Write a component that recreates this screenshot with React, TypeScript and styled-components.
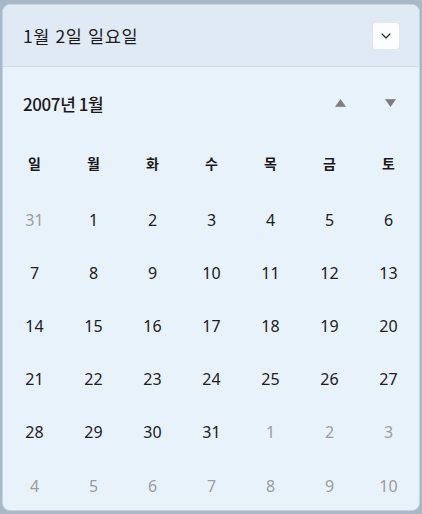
import React from "react";
import styled, { createGlobalStyle } from "styled-components";

const GlobalStyle = createGlobalStyle`
  html, body {
    margin: 0;
    padding: 0;
    background: #a9b8c7;
  }
  body {
    font-family: "Noto Sans", "Noto Sans CJK KR", sans-serif;
  }
`;

const Page = styled.div`
  width: 422px;
  height: 514px;
  padding: 4px 2px 3px 2px;
  box-sizing: border-box;
`;

const Flyout = styled.div`
  height: 100%;
  box-sizing: border-box;
  border: 1px solid #c7d2dc;
  border-radius: 8px;
  background: #e8f2fa;
  overflow: hidden;
  display: flex;
  flex-direction: column;
`;

const Header = styled.div`
  height: 62px;
  flex: none;
  box-sizing: border-box;
  display: flex;
  align-items: center;
  justify-content: space-between;
  padding: 0 19px 0 20px;
  background: #dfeaf4;
  border-bottom: 1px solid #cfdbe6;
`;

const Title = styled.div`
  font-family: "Noto Sans CJK KR", sans-serif;
  font-size: 17.5px;
  color: #1c1c1c;
  letter-spacing: 0.6px;
  word-spacing: 1px;
`;

const ExpandButton = styled.div`
  width: 28px;
  height: 28px;
  box-sizing: border-box;
  border-radius: 4px;
  background: #fbfdfe;
  border: 1px solid #e1e7ec;
  display: flex;
  align-items: center;
  justify-content: center;
`;

const MonthBar = styled.div`
  height: 72px;
  flex: none;
  display: flex;
  align-items: center;
  padding: 0 4px 0 20px;
`;

const MonthLabel = styled.div`
  flex: 1;
  font-family: "Noto Sans CJK KR", sans-serif;
  font-size: 17px;
  font-weight: 500;
  color: #1a1a1a;
  letter-spacing: -0.4px;
`;

const NavButton = styled.div`
  width: 50px;
  height: 30px;
  display: flex;
  align-items: center;
  justify-content: center;
`;

const Grid = styled.div`
  display: grid;
  grid-template-columns: repeat(7, 59px);
  grid-template-rows: 54px repeat(6, 53.2px);
  padding: 0 0 0 2px;
`;

const WeekDay = styled.div`
  display: flex;
  align-items: center;
  justify-content: center;
  font-family: "Noto Sans CJK KR", sans-serif;
  font-size: 14px;
  font-weight: 700;
  color: #1a1a1a;
  margin-bottom: 6px;
`;

const Day = styled.div<{ $muted?: boolean }>`
  display: flex;
  align-items: center;
  justify-content: center;
  font-size: 16px;
  color: ${(p) => (p.$muted ? "#9b9d9f" : "#202020")};
`;

const weekDays = ["일", "월", "화", "수", "목", "금", "토"];

const days: { n: number; muted: boolean }[] = [
  { n: 31, muted: true },
  ...Array.from({ length: 31 }, (_, i) => ({ n: i + 1, muted: false })),
  ...Array.from({ length: 10 }, (_, i) => ({ n: i + 1, muted: true })),
];

const Triangle = ({ up }: { up?: boolean }) => (
  <svg width="11" height="8" viewBox="0 0 11 8">
    <path
      d={up ? "M5.5 0.5 L10.5 7.5 L0.5 7.5 Z" : "M0.5 0.5 L10.5 0.5 L5.5 7.5 Z"}
      fill="#7b7d80"
      strokeLinejoin="round"
      stroke="#7b7d80"
      strokeWidth="0.6"
    />
  </svg>
);

export default function App() {
  return (
    <Page>
      <GlobalStyle />
      <Flyout>
        <Header>
          <Title>1월 2일 일요일</Title>
          <ExpandButton>
            <svg width="10" height="6" viewBox="0 0 10 6">
              <path d="M1 1 L5 5 L9 1" fill="none" stroke="#2a2a2a" strokeWidth="1.2" strokeLinecap="round" strokeLinejoin="round" />
            </svg>
          </ExpandButton>
        </Header>
        <MonthBar>
          <MonthLabel>2007년 1월</MonthLabel>
          <NavButton>
            <Triangle up />
          </NavButton>
          <NavButton>
            <Triangle />
          </NavButton>
        </MonthBar>
        <Grid>
          {weekDays.map((w) => (
            <WeekDay key={w}>{w}</WeekDay>
          ))}
          {days.map((d, i) => (
            <Day key={i} $muted={d.muted}>
              {d.n}
            </Day>
          ))}
        </Grid>
      </Flyout>
    </Page>
  );
}
